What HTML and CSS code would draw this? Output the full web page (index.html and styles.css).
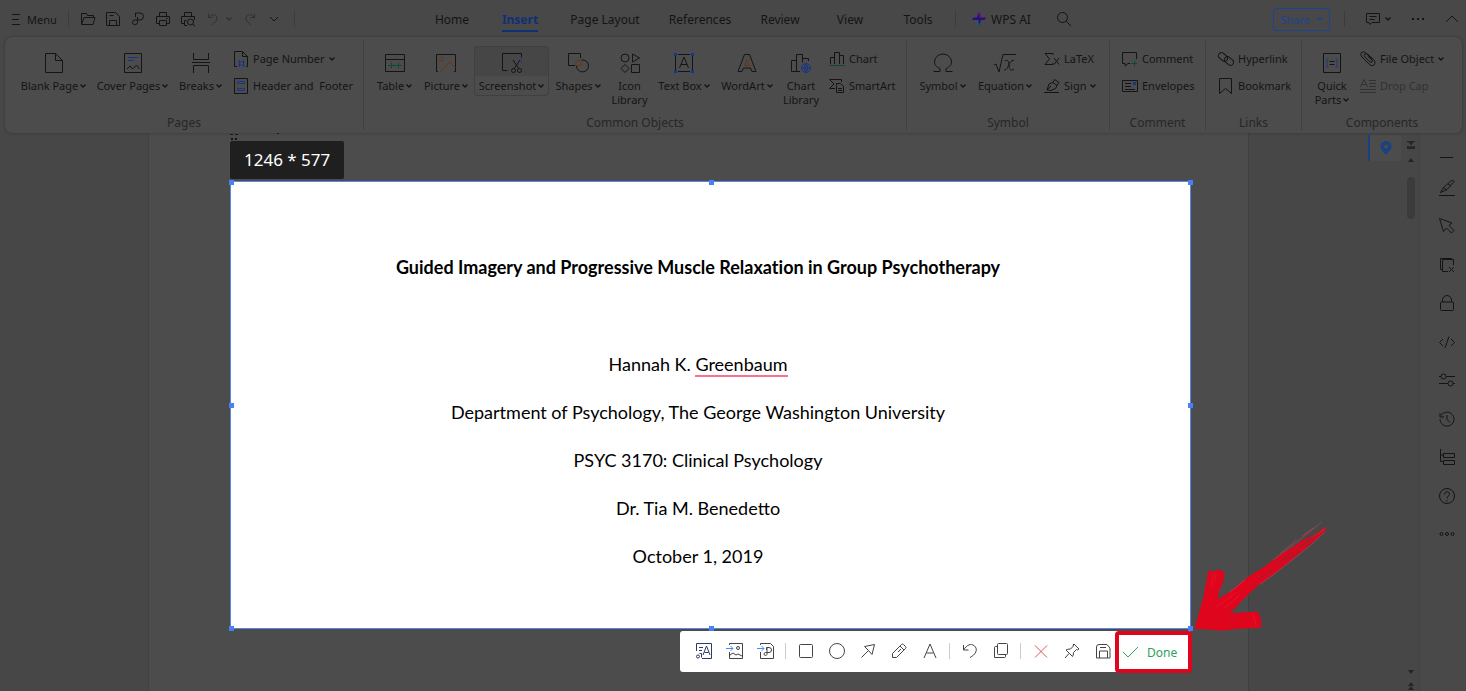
FILE: index.html
```html
<!DOCTYPE html>
<html lang="en">
<head>
    <meta charset="utf-8">
    <title>WPS Writer - Screenshot</title>
    <link rel="stylesheet" href="styles.css">
</head>
<body>
    <svg class="sprite" aria-hidden="true">
        <symbol id="caret" viewBox="0 0 6 6"><path d="M.5 1.500l2.500 2.500 2.500-2.500" fill="none" stroke="currentColor" stroke-width="1.4"/></symbol>
    </svg>

    <header class="topbar">
        <button class="menu-button">
            <svg width="10" height="13" viewBox="0 0 10 13"><path d="M1 1.500h8M1 6.500h7M1 11.500h8"/></svg>
            Menu
        </button>
        <span class="divider"></span>
        <div class="quick-access">
            <button aria-label="Open"><svg width="16" height="16" viewBox="0 0 16 16"><path d="M1.500 13V2.500h5l1 2h6v2M1.500 13.500l2.500-7h11l-2 7z"/></svg></button>
            <button aria-label="Save"><svg width="16" height="16" viewBox="0 0 16 16"><path d="M1.500 1.500h9l4 4v9h-13zM4.500 14.500v-5h7v5M4.500 4.500h4"/></svg></button>
            <button aria-label="Export to PDF"><svg width="16" height="16" viewBox="0 0 16 16"><path d="M5.500 6V2h4.500a3.500 3.500 0 0 1 0 7H4a2.500 2.500 0 1 0 3.500 2.500V6"/></svg></button>
            <button aria-label="Print"><svg width="16" height="16" viewBox="0 0 16 16"><path d="M4.500 5V1.500h7V5M4 12.500H1.500v-7h13v7H12M4.500 9.500h7v5h-7zM11 7.500h1.500"/></svg></button>
            <button aria-label="Print preview"><svg width="16" height="16" viewBox="0 0 16 16"><path d="M4.500 5V1.500h7V5M5 12.500H1.500v-7h13V9M4.500 14.500v-5h2M7 14.500H4.500"/><circle cx="10.500" cy="11" r="3"/><path d="M12.800 13.200l2.200 2"/></svg></button>
            <button class="disabled" aria-label="Undo"><svg width="16" height="16" viewBox="0 0 16 16"><path d="M3.500 2.500v4h4M3.500 6.500C7 2 12 3.500 12 7.500c0 3-3 4-5 6.500"/></svg></button>
            <button class="disabled narrow" aria-label="Undo list"><svg class="caret"><use href="#caret"/></svg></button>
            <button class="disabled redo" aria-label="Redo"><svg width="16" height="16" viewBox="0 0 16 16"><path d="M12.500 2.500v4h-4M12.500 6.500C9 2 4 3.500 4 7.500c0 3 3 4 5 6.500"/></svg></button>
            <button class="customize" aria-label="Customize toolbar"><svg width="16" height="16" viewBox="0 0 16 16"><path d="M4 6l4 4 4-4"/></svg></button>
        </div>
        <span class="divider"></span>

        <nav class="tabs">
            <a href="#home">Home</a>
            <a href="#insert" class="active">Insert</a>
            <a href="#layout">Page Layout</a>
            <a href="#references">References</a>
            <a href="#review">Review</a>
            <a href="#view">View</a>
            <a href="#tools">Tools</a>
        </nav>
        <span class="divider"></span>
        <button class="ai-button">
            <svg width="14" height="16" viewBox="0 0 14 16">
                <path class="ai-pink" d="M5.500 7.500V2.500L9 1v6z"/>
                <path class="ai-teal" d="M5 8.500V15l3.500-2.500v-4z"/>
                <path class="ai-violet" d="M0 9l1.500-2.500H5L7 1.500l.5 5H14L12.500 9H9l-2 5.500L6.500 9z"/>
            </svg>
            WPS AI
        </button>
        <button class="search-button" aria-label="Search"><svg width="16" height="16" viewBox="0 0 16 16"><circle cx="6.500" cy="6.500" r="5"/><path d="M10 10l5 5"/></svg></button>

        <div class="window-tools">
            <button class="share">Share <svg class="caret"><use href="#caret"/></svg></button>
            <span class="divider"></span>
            <button class="comments" aria-label="Comments">
                <svg width="16" height="14" viewBox="0 0 16 14"><path d="M1.500 1.500h13v9H7l-2 2-1-2H1.500zM4.500 4.500h7M4.500 7.500h5"/></svg>
                <svg class="caret"><use href="#caret"/></svg>
            </button>
            <button aria-label="More"><svg width="14" height="4" viewBox="0 0 14 4"><path class="solid" d="M1 1h2v2H1zM6 1h2v2H6zM11 1h2v2h-2z"/></svg></button>
            <button aria-label="Collapse ribbon"><svg width="14" height="10" viewBox="0 0 14 10"><path d="M1 8l6-6 6 6"/></svg></button>
        </div>
    </header>

    <section class="ribbon">
        <div class="group">
            <div class="items items-pages">
                <button class="big"><svg width="22" height="22" viewBox="0 0 22 22"><path d="M2.500 1.500h10l7 7v12h-17zM12.500 1.500v7h7"/></svg><span>Blank Page<svg class="caret"><use href="#caret"/></svg></span></button>
                <button class="big"><svg width="22" height="22" viewBox="0 0 22 22"><path d="M2.500 1.500h17v19h-17zM5 17l3-3 2.500 3 4-4 3 4"/><path class="blue" d="M6 5.500h10M6 8.500h6"/></svg><span>Cover Pages<svg class="caret"><use href="#caret"/></svg></span></button>
                <button class="big"><svg width="22" height="22" viewBox="0 0 22 22"><path d="M3.500 1v6.500h15V1M2 10.500h18M3.500 21v-7.500h15V21"/></svg><span>Breaks<svg class="caret"><use href="#caret"/></svg></span></button>
                <div class="stack">
                    <button class="small"><svg width="16" height="18" viewBox="0 0 16 18"><path d="M4 16.500H1.500v-15h8l5 5v10H13M9.500 1.500v5h5"/><path class="blue" d="M6.500 10v7M10.500 10v7M5 12h7M5 15h7"/></svg>Page Number<svg class="caret"><use href="#caret"/></svg></button>
                    <button class="small pre"><svg width="16" height="18" viewBox="0 0 16 18"><path d="M1.500 1.500h13v15h-13z"/><path class="blue" d="M4.500 4.500h7v2h-7zM4.500 11.500h7v2h-7z"/></svg>Header and  Footer</button>
                </div>
            </div>
            <div class="group-name">Pages</div>
        </div>

        <div class="group">
            <div class="items items-objects">
                <button class="big"><svg width="22" height="22" viewBox="0 0 22 22"><path d="M1.500 2.500h19v17h-19zM1.500 7.500h19"/><path class="green" d="M4 13.500h14M7.500 10.500v6M14.500 10.500v6"/></svg><span>Table<svg class="caret"><use href="#caret"/></svg></span></button>
                <button class="big"><svg width="22" height="22" viewBox="0 0 22 22"><path d="M3 19.500H1.500v-17h19v17H19M1.500 19.500v-4"/><circle class="orange" cx="6.500" cy="7" r="2"/><path class="orange" d="M5 19.500L15 10l5.500 6"/></svg><span>Picture<svg class="caret"><use href="#caret"/></svg></span></button>
                <button class="big selected"><svg width="22" height="22" viewBox="0 0 22 22"><path d="M7 18.500H1.500v-17h19V5M12 8l6 9M19 8l-6 9"/><path class="blue" d="M20.500 5v6M6 18.500h3" stroke-dasharray="2 2"/><circle cx="12.500" cy="18.500" r="2"/><circle cx="18.500" cy="18.500" r="2"/></svg><span>Screenshot<svg class="caret"><use href="#caret"/></svg></span></button>
                <button class="big"><svg width="22" height="22" viewBox="0 0 22 22"><path d="M8 13.500H1.500v-12h12V6M9.500 14a6 6 0 1 0 5-6"/><path class="orange" d="M8.500 13.500c0-4 2-5.500 5.500-5.500v5.500z"/></svg><span>Shapes<svg class="caret"><use href="#caret"/></svg></span></button>
                <button class="big"><svg width="22" height="22" viewBox="0 0 22 22"><circle cx="6" cy="6" r="4"/><path d="M13.500 2v8l7-4zM6 12.500l4 4-4 4-4-4zM12.500 12.500h8v8h-8z"/></svg><span>Icon<br>Library</span></button>
                <button class="big"><svg width="22" height="22" viewBox="0 0 22 22"><path d="M2.500 4v14M19.500 4v14M5 2.500h12M5 19.500h12M6.500 16L11 5l4.500 11M8 12.500h6"/><path class="blue-dots" d="M1 1h3v3H1zM18 1h3v3h-3zM1 18h3v3H1zM18 18h3v3h-3z"/></svg><span>Text Box<svg class="caret"><use href="#caret"/></svg></span></button>
                <button class="big"><svg width="22" height="22" viewBox="0 0 22 22"><path d="M2 19.500L8.500 2.500h5l6.500 17h-4l-1.500-3.500h-7L6 19.500z"/><path class="orange" d="M8.500 13.500l2.500-6 2.500 6z"/></svg><span>WordArt<svg class="caret"><use href="#caret"/></svg></span></button>
                <button class="big"><svg width="22" height="22" viewBox="0 0 22 22"><path d="M1.500 8.500h5v11h-5zM10 19.500H6.500v-17h6v8M12.500 6.500h6V9"/><circle class="blue" cx="16" cy="16" r="4.500"/><path class="blue" d="M11.500 16h9M16 11.500v9M16 11.500q-4 4.500 0 9M16 11.500q4 4.500 0 9"/></svg><span>Chart<br>Library</span></button>
                <div class="stack">
                    <button class="small"><svg width="16" height="16" viewBox="0 0 16 16"><path d="M1.500 13V6.500h4V13M5.500 13V1.500h5V13M10.500 4.500h4V13"/><path class="green" d="M0 14.500h16"/></svg>Chart</button>
                    <button class="small"><svg width="16" height="16" viewBox="0 0 16 16"><path d="M12.500 4V1.500h-12L5 6 .5 10.500H6M7.500 7.500v-2h4l3 3v6h-7zM9 10.500h4M9 12.500h4"/></svg>SmartArt</button>
                </div>
            </div>
            <div class="group-name">Common Objects</div>
        </div>

        <div class="group">
            <div class="items items-symbol">
                <button class="big"><svg width="22" height="22" viewBox="0 0 22 22"><path d="M1.500 19.500H8v-3C4 15 2.500 12.500 2.500 10a8.500 8 0 0 1 17 0c0 2.500-1.500 5-5.500 6.500v3h6.500"/></svg><span>Symbol<svg class="caret"><use href="#caret"/></svg></span></button>
                <button class="big"><svg width="24" height="22" viewBox="0 0 24 22"><path d="M1 13l2-1 3 8L10 2.500h13M12 9c3-2 4 1 4 4s1 7 5 4M21 8.500c-3-1-5 4-6 6s-2 4-4 3"/></svg><span>Equation<svg class="caret"><use href="#caret"/></svg></span></button>
                <div class="stack">
                    <button class="small"><svg width="16" height="16" viewBox="0 0 16 16"><path d="M9 4V2.500H1L5.500 8 1 13.500h8V12M10 7l5 6.500M15 7l-5 6.500"/></svg>LaTeX</button>
                    <button class="small"><svg width="16" height="16" viewBox="0 0 16 16"><path d="M0 14.500h15M3 12l2-6 4-1.500 4 3-1.500 3L7 12.500zM9 4.500l1.500-3 4.500 3-2 3M3 12l4-4"/></svg>Sign<svg class="caret"><use href="#caret"/></svg></button>
                </div>
            </div>
            <div class="group-name">Symbol</div>
        </div>

        <div class="group">
            <div class="items">
                <div class="stack">
                    <button class="small"><svg width="16" height="16" viewBox="0 0 16 16"><path d="M14.500 8V1.500H.5v11H3V15l3-2.500h2"/><path class="green" d="M9 12.500h6M12.500 9.500v6"/></svg>Comment</button>
                    <button class="small"><svg width="16" height="16" viewBox="0 0 16 16"><path d="M.5 2.500h15v11H.5zM3 5.500h6M3 8.500h6M3 11.500h10"/><path class="blue-dots" d="M11 4h3v3h-3z"/></svg>Envelopes</button>
                </div>
            </div>
            <div class="group-name">Comment</div>
        </div>

        <div class="group">
            <div class="items">
                <div class="stack">
                    <button class="small"><svg width="16" height="16" viewBox="0 0 16 16"><rect x="0" y="3" width="10" height="6" rx="3" transform="rotate(40 5 6)"/><rect x="6" y="7" width="10" height="6" rx="3" transform="rotate(40 11 10)"/></svg>Hyperlink</button>
                    <button class="small"><svg width="16" height="16" viewBox="0 0 16 16"><path d="M1.500.5h12v15l-6-5-6 5z"/></svg>Bookmark</button>
                </div>
            </div>
            <div class="group-name">Links</div>
        </div>

        <div class="group">
            <div class="items items-components">
                <button class="big"><svg width="22" height="22" viewBox="0 0 22 22"><path d="M2.500 1.500h17v19h-17z"/><path d="M8.500 9.500h5M8.500 12.500h5"/><path class="blue" d="M7.500 7H6v8h1.500M14.500 7H16v8h-1.500"/></svg><span>Quick<br>Parts<svg class="caret"><use href="#caret"/></svg></span></button>
                <div class="stack">
                    <button class="small"><svg width="16" height="16" viewBox="0 0 16 16"><path d="M12 8L6 2C2-1-1 3 2 6l7 7c4 4 8 0 5-4L8 3.500C5 2 3 3.500 5 6l5 5c2 1 3-.5 2-2L7.500 5"/></svg>File Object<svg class="caret"><use href="#caret"/></svg></button>
                    <button class="small disabled" disabled><svg width="16" height="16" viewBox="0 0 16 16"><path d="M.5 9L4 1.500 7.500 9M2 6.500h4M9 2.500h7M9 5.500h7M9 8.500h7M0 11.500h16M0 14.500h16"/></svg>Drop Cap</button>
                </div>
            </div>
            <div class="group-name">Components</div>
        </div>
    </section>

    <main class="workspace">
        <div class="page">
            <svg class="clipped-line" width="50" height="8" viewBox="0 0 50 8"><path class="solid" d="M0 1h3v1H0zM5 1h3v1H5zM1 5h2v2H1zM5 5h2v2H5zM47 0h2v1h-2z"/></svg>
            <div class="size-tag">1246 * 577</div>
            <article class="capture">
                <h1>Guided Imagery and Progressive Muscle Relaxation in Group Psychotherapy</h1>
                <p>Hannah K. <span class="misspelled">Greenbaum</span></p>
                <p>Department of Psychology, The George Washington University</p>
                <p>PSYC 3170: Clinical Psychology</p>
                <p>Dr. Tia M. Benedetto</p>
                <p>October 1, 2019</p>

                <i class="handle top left"></i>
                <i class="handle top center"></i>
                <i class="handle top right"></i>
                <i class="handle middle left"></i>
                <i class="handle middle right"></i>
                <i class="handle bottom left"></i>
                <i class="handle bottom center"></i>
                <i class="handle bottom right"></i>

                <svg class="arrow" width="135" height="113" viewBox="760 25 405 340">
                    <path class="paint" d="M764 356L775 315 790 262 798 222 805 180 820 183 838 177 855 186 849 220 838 240 834 266 870 243 900 219 930 196 965 175 1000 150 1030 128 1060 110 1090 88 1130 68 1156 50 1160 58 1140 78 1115 98 1090 120 1060 145 1030 168 995 196 960 222 930 248 900 278 872 308 910 306 954 303 964 326 965 352 930 354 890 356 845 361 800 357z"/>
                    <path class="paint-edge" d="M1000 148l50-36 40-32 30-24 26-22M1022 128l36-28 12-14M1088 76l34-24M870 246l46-38M960 222l50-36 56-44 50-40 40-38M1110 84l48-30"/>
                    <path class="paint-gap" d="M955 208l46-33M1010 160l52-36M1035 152l45-32M1072 116l48-38M1085 108l40-30M1100 92l46-34M935 228l18-14"/>
                    <path class="paint-light" d="M820 188l-6 40M829 186l-5 30M940 312l10 34M830 290l60-44M850 296l50-42"/>
                </svg>
            </article>

            <div class="capture-bar">
                <button aria-label="Recognize text"><svg width="18" height="18" viewBox="0 0 18 18"><g class="navy"><path d="M1.500 9V1.500h15v15H7M8 13l3.500-9 3.500 9M9.500 10.500h4M4 5.500h4M4 8.500h3M4.500 11.500h2v4"/><circle cx="3" cy="14.500" r="1.500"/></g></svg></button>
                <button aria-label="Convert to picture"><svg width="18" height="18" viewBox="0 0 18 18"><path d="M3.500 3V1.500h13v15h-13V10M4 13l3-2 3 2 2-1 4 2"/><circle cx="12" cy="6" r="1.500"/><path class="bright" d="M0 6.500h7M4.500 4L7 6.500 4.500 9"/></svg></button>
                <button aria-label="Convert to PDF"><svg width="18" height="18" viewBox="0 0 18 18"><path d="M3.500 3V1.500h10l3 3v12h-13V10M9.500 8V5.500H12a2 2 0 0 1 0 5H8.500a1.500 1.500 0 1 0 1.500 2V6"/><path class="bright" d="M0 6.500h7M4.500 4L7 6.500 4.500 9"/></svg></button>
                <span class="bar-divider"></span>
                <button aria-label="Rectangle"><svg width="18" height="18" viewBox="0 0 18 18"><rect x="2.500" y="2.500" width="13" height="13" rx="1"/></svg></button>
                <button aria-label="Ellipse"><svg width="18" height="18" viewBox="0 0 18 18"><circle cx="9" cy="9" r="7.500"/></svg></button>
                <button aria-label="Arrow"><svg width="18" height="18" viewBox="0 0 18 18"><path d="M2.500 15.500L9.500 8.500M5.500 4.500L15.500 2.500 13 12.500 9.500 8.500z"/></svg></button>
                <button aria-label="Pencil"><svg width="18" height="18" viewBox="0 0 18 18"><path d="M2.500 15.500v-4l9-9q1-1 2 0l2 2q1 1 0 2l-9 9zM10 4l4 4M8 10l3-3"/></svg></button>
                <button aria-label="Text"><svg width="18" height="18" viewBox="0 0 18 18"><path d="M3 16L9 2l6 14M5.500 11h7"/></svg></button>
                <span class="bar-divider"></span>
                <button aria-label="Undo"><svg width="18" height="18" viewBox="0 0 18 18"><path d="M2.500 3v5h5M2.500 8C6 2.500 10 1.500 13 3.500c5 4 1 9.500-4 12"/></svg></button>
                <button aria-label="Copy"><svg width="18" height="18" viewBox="0 0 18 18"><rect x="5.500" y="1.500" width="10" height="11" rx="1"/><path d="M5.500 4.500h-2q-1 0-1 1v10h10q1 0 1-1v-2"/></svg></button>
                <span class="bar-divider"></span>
                <button class="cancel" aria-label="Cancel"><svg width="18" height="18" viewBox="0 0 18 18"><path d="M3 3.500l12 12M15 3.500l-12 12"/></svg></button>
                <button aria-label="Pin"><svg width="18" height="18" viewBox="0 0 18 18"><path d="M11 2l5 5-1.500 1-1-.5-3 3q0 3-1 4L3 8q1.500-1 4.500-1l3-3-.5-1zM6 11.500L2 16"/></svg></button>
                <button aria-label="Save"><svg width="18" height="18" viewBox="0 0 18 18"><path d="M2.500 5q0-2.500 2.500-2.500h8l3 3.500v10h-13.500zM5.500 16V9h8v7M6 5.500h6"/></svg></button>
                <button class="done"><svg width="18" height="18" viewBox="0 0 18 18"><path d="M2 9l5 5L17 4"/></svg>Done</button>
            </div>
        </div>

        <div class="locator"><svg width="12" height="14" viewBox="0 0 12 14"><path d="M6 0a5.500 5.500 0 0 1 5.500 5.500C11.500 9 8 11 6 14 4 11 .5 9 .5 5.500A5.500 5.500 0 0 1 6 0zM6 3.500a2 2 0 1 0 .01 0z"/></svg></div>

        <div class="scroll">
            <svg width="8" height="24" viewBox="0 0 8 24"><path class="solid" d="M0 1h8v1H0zM1.500 2h5L4 5.500zM0 6h2v3H0zM3 6h2v3H3zM6 6h2v3H6zM0 7h8v2H0zM4 18l3 4H1z"/></svg>
            <div class="thumb"></div>
            <svg class="scroll-down" width="8" height="22" viewBox="0 0 8 22"><path class="solid" d="M1 1h6L4 5zM4 13l3 4H1zM4 17l3 4H1z"/></svg>
        </div>

        <aside class="sidebar">
            <button aria-label="Collapse"><svg width="16" height="16" viewBox="0 0 16 16"><path d="M1 8.500h13"/></svg></button>
            <div class="sidebar-tools">
                <button aria-label="Edit"><svg width="16" height="16" viewBox="0 0 16 16"><path d="M0 15.500h16M1.500 12.500l3-5 8-7q2-.5 2.500 1l-7 8zM4.500 7.500l3 2.500M9 4l3 2"/></svg></button>
                <button aria-label="Select"><svg width="16" height="16" viewBox="0 0 16 16"><path d="M.5.500l4 13 3-3.500 5 5 2.500-2.500-5-5L13 5z"/></svg></button>
                <button aria-label="Remove"><svg width="16" height="16" viewBox="0 0 16 16"><path d="M9 14.500H3.500v-12h11V8M3 12.500H1.500V1.500H13M10 10l5 5M15 10l-5 5"/></svg></button>
                <button aria-label="Protect"><svg width="16" height="16" viewBox="0 0 16 16"><rect x="1.500" y="7" width="13" height="8.500" rx="1"/><path d="M3.500 7V5a4.500 4.500 0 0 1 9 0v2"/></svg></button>
                <button aria-label="Code"><svg width="16" height="16" viewBox="0 0 16 16"><path d="M4 5L.5 8.500 4 12M12 5l3.500 3.500L12 12M10 2.500L6 14"/></svg></button>
                <button aria-label="Settings"><svg width="16" height="16" viewBox="0 0 16 16"><circle cx="4.500" cy="4.500" r="2.500"/><circle cx="11.500" cy="11.500" r="2.500"/><path d="M0 4.500h2M7 4.500h9M0 11.500h9M14 11.500h2"/></svg></button>
                <button aria-label="History"><svg width="16" height="16" viewBox="0 0 16 16"><path d="M2 4.500a7 7 0 1 1-1 3.500M1 2v4h4M8 4v4.500l3 3"/></svg></button>
                <button aria-label="Outline"><svg width="16" height="16" viewBox="0 0 16 16"><path d="M1.500 0v12.500H4M1.500 6H4M4.500 4.500h11v4h-11zM4.500 11.500h11v4h-11z"/></svg></button>
                <button aria-label="Help"><svg width="16" height="16" viewBox="0 0 16 16"><circle cx="8" cy="8" r="7.500"/><path d="M5.500 6.500C5.500 2.500 11 3 10.500 6.500 10 8 8 8 8 10.500M8 12v1.500"/></svg></button>
                <button aria-label="More tools"><svg width="16" height="16" viewBox="0 0 16 16"><circle cx="2.500" cy="8" r="1.500"/><circle cx="8" cy="8" r="1.500"/><circle cx="13.500" cy="8" r="1.500"/></svg></button>
            </div>
        </aside>
    </main>
</body>
</html>
```
FILE: styles.css
```css
* {
    box-sizing: border-box;
}
body {
    margin: 0;
    height: 100vh;
    display: flex;
    flex-direction: column;
    overflow: hidden;
    background: #484848;
    color: #141414;
    font-family: "Noto Sans", "Open Sans", sans-serif;
    font-size: 11px;
}
button {
    display: flex;
    align-items: center;
    justify-content: center;
    padding: 0;
    border: none;
    background: none;
    color: inherit;
    font: inherit;
    white-space: nowrap;
    cursor: pointer;
}
a {
    color: inherit;
    text-decoration: none;
}
svg {
    display: block;
    flex: none;
    fill: none;
    stroke: currentColor;
    stroke-width: 1;
}
.sprite {
    display: none;
}
.caret {
    display: inline-block;
    width: 6px;
    height: 6px;
    margin-left: 2px;
    vertical-align: 1px;
}
.solid {
    fill: currentColor;
    stroke: none;
}
.blue {
    stroke: #1a3488;
}
.blue-dots {
    fill: #1a3488;
    stroke: none;
}
.green {
    stroke: #0c4a31;
}
.orange {
    stroke: #703214;
}
.disabled {
    color: #313131;
}

/* top bar */
.topbar {
    display: flex;
    align-items: center;
    height: 37px;
    padding: 1px 7px 0 11px;
    flex: none;
    font-size: 12px;
}
.divider {
    width: 1px;
    height: 16px;
    background: #3b3b3b;
}
.menu-button {
    gap: 6px;
    width: 57px;
    justify-content: flex-start;
    font-size: 11px;
}
.quick-access {
    display: flex;
    width: 225px;
    padding-left: 6px;
}
.quick-access button {
    width: 25px;
}
.quick-access .narrow {
    width: 6px;
}
.quick-access .redo {
    width: 37px;
}
.quick-access .customize {
    width: 12px;
}
.tabs {
    display: grid;
    grid-template-columns: 68px 68px 102px 88px 72px 68px 68px;
    margin-left: 123px;
    margin-right: 3px;
    text-align: center;
}
.tabs a {
    justify-self: center;
    padding-top: 3px;
    line-height: 20px;
    border-bottom: 2px solid transparent;
}
.tabs .active {
    color: #0e3076;
    border-color: #0e3076;
    font-weight: bold;
}
.ai-button {
    gap: 5px;
    margin-left: 16px;
}
.ai-button path {
    stroke: none;
}
.ai-violet {
    fill: #2d0d7c;
}
.ai-pink {
    fill: #5f2272;
}
.ai-teal {
    fill: #195a78;
}
.search-button {
    margin-left: 25px;
}
.window-tools {
    display: flex;
    align-items: center;
    gap: 20px;
    margin-left: auto;
}
.window-tools .divider {
    margin-left: -6px;
}
.share {
    width: 57px;
    height: 23px;
    gap: 5px;
    border: 1px solid #1c4492;
    border-radius: 3px;
    color: #1c4492;
    font-size: 11px;
}
.comments {
    gap: 2px;
}

/* ribbon */
.ribbon {
    display: grid;
    grid-template-columns: 359fr 543fr 203fr 96fr 96fr 160fr;
    flex: none;
    height: 96px;
    margin: 0 4px 0 5px;
    padding: 4px 0 3px;
    border-radius: 7px;
    background: #4c4c4c;
    box-shadow: 0 0 3px #333;
    position: relative;
}
.group {
    display: flex;
    flex-direction: column;
    justify-content: space-between;
    min-width: 0;
    border-right: 1px solid #404040;
}
.group:last-child {
    border-right: none;
}
.items {
    display: grid;
    align-items: start;
    gap: 11px;
    padding: 4px 0 0 12px;
}
.items-pages {
    grid-template-columns: 65px 71px 43px 120px;
    padding-left: 16px;
}
.items-objects {
    grid-template-columns: 37px 44px 65px 46px 35px 52px 52px 34px 66px;
}
.items-symbol {
    grid-template-columns: 47px 56px 52px;
}
.items-components {
    grid-template-columns: 34px 84px;
    padding-left: 13px;
}
.big {
    flex-direction: column;
    margin-top: 1px;
    padding: 6px 0 3px;
    line-height: 14px;
}
.big > svg {
    margin-bottom: 5px;
}
.big.selected {
    margin-left: -5px;
    margin-right: -5px;
    border-radius: 4px;
    background: linear-gradient(#464646 30px, transparent 30px);
    box-shadow: inset 0 0 0 1px #404040;
}
.stack {
    display: flex;
    flex-direction: column;
    align-items: flex-start;
}
.small {
    height: 27px;
    gap: 4px;
}
.small .caret {
    margin-left: 0;
}
.pre {
    white-space: pre;
}
.group-name {
    color: #272727;
    font-size: 12px;
    line-height: 14px;
    text-align: center;
}

/* document area */
.workspace {
    display: flex;
    flex: 1;
    min-height: 0;
    background: #474747;
}
.page {
    flex: 1;
    min-width: 0;
    margin: 0 119px 0 148px;
    padding: 0 57px 0 81px;
    border: solid #404040;
    border-width: 0 1px;
    background: #4c4c4c;
    display: flex;
    flex-direction: column;
    align-items: flex-start;
}
.size-tag {
    margin-bottom: 2px;
    padding: 0 14px;
    border-radius: 2px;
    background: #1f1f1f;
    color: #fff;
    font-size: 17px;
    line-height: 38px;
}
.capture {
    position: relative;
    align-self: stretch;
    padding: 61px 25px 48px 0;
    border: 1px solid #5b87e8;
    background: #fff;
    color: #000;
    font-family: Lato, "Open Sans", sans-serif;
    font-size: 18px;
    line-height: 48px;
    text-align: center;
}
.capture h1 {
    margin: 0 0 49px;
    font-size: 18px;
    font-variant-ligatures: none;
}
.capture p {
    margin: 0;
}
.misspelled {
    border-bottom: 2px solid #f77290;
}
.handle {
    position: absolute;
    width: 5px;
    height: 5px;
    background: #4a80f5;
}
.top {
    top: -2px;
}
.middle {
    top: 50%;
    margin-top: -2px;
}
.bottom {
    bottom: -3px;
}
.left {
    left: -2px;
}
.center {
    left: 50%;
    margin-left: -2px;
}
.right {
    right: -3px;
}
.arrow {
    position: absolute;
    left: 100%;
    bottom: -4px;
    margin-left: 3px;
    z-index: 2;
}
.paint {
    fill: #df051d;
    stroke: none;
}
.paint-edge {
    stroke: #b84455;
    stroke-width: 2;
}
.paint-gap {
    stroke: #5c3a3f;
    stroke-width: 2;
}
.paint-light {
    stroke: #ee1630;
    stroke-width: 2;
}

/* capture toolbar */
.capture-bar {
    display: flex;
    align-items: flex-start;
    align-self: flex-end;
    height: 41px;
    margin-top: 2px;
    padding-left: 8px;
    border-radius: 3px;
    background: #fff;
    color: #444;
}
.capture-bar button {
    width: 31px;
    height: 39px;
}
.bar-divider {
    width: 1px;
    height: 16px;
    margin: 12px 4px 0;
    background: #ccc;
}
.navy {
    stroke: #2c3a66;
}
.bright {
    stroke: #4a8df5;
}
.capture-bar .cancel {
    color: #e35252;
}
.capture-bar .done {
    position: relative;
    justify-content: flex-start;
    width: 77px;
    height: 42px;
    gap: 8px;
    margin: 0 -1px 0 -3px;
    padding-left: 2px;
    border: 4px solid #df051d;
    border-radius: 4px;
    background: #fff;
    color: #2ba35c;
    font-size: 12px;
}

/* right side */
.locator {
    display: flex;
    align-items: center;
    justify-content: center;
    width: 33px;
    height: 26px;
    margin-top: 2px;
    border-left: 2px solid #1a4280;
    background: #4c4c4c;
}
.locator path {
    fill: #1a4280;
    stroke: none;
    fill-rule: evenodd;
}
.scroll {
    display: flex;
    flex-direction: column;
    align-items: center;
    width: 19px;
    padding: 7px 0 0 2px;
    border-right: 1px solid #424242;
    color: #252525;
}
.thumb {
    width: 8px;
    height: 42px;
    margin-top: 13px;
    border-radius: 4px;
    background: #3b3b3b;
}
.scroll-down {
    margin-top: auto;
}
.sidebar {
    width: 46px;
    padding: 16px 0 0 19px;
    background: #494949;
}
.sidebar-tools {
    display: flex;
    flex-direction: column;
    align-items: flex-start;
    justify-content: space-between;
    height: 362px;
    margin-top: 15px;
}
```
